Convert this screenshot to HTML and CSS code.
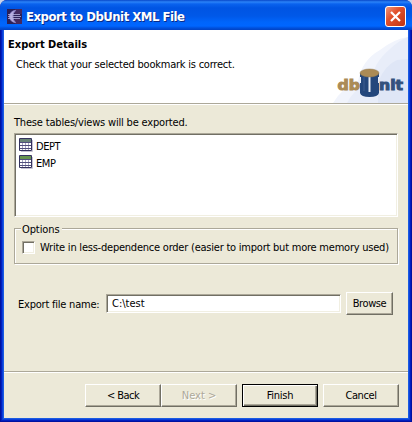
FILE: index.html
```
<!DOCTYPE html>
<html lang="en">
<head>
<meta charset="utf-8">
<title>Export to DbUnit XML File</title>
<link rel="stylesheet" href="styles.css">
</head>
<body>
<div class="window">
  <div class="titlebar">
    <svg class="app-icon" width="15" height="15" viewBox="0 0 15 15">
      <rect width="15" height="15" fill="#2a2058"/>
      <path d="M8 0H15V5H8ZM8 10H15V15H8Z" fill="#43295f"/>
      <path d="M8.500 1.500A6 6 0 0 0 8.500 13.500A8 8 0 0 1 8.500 1.500" fill="#b7aee0" stroke="#9186c8"/>
      <path d="M1 5.500H13M1 7.500H14M1 9.500H13" stroke="#b9b2de" stroke-width=".8"/>
    </svg>
    <h1 class="title"><span class="t-title">Export to DbUnit XML File</span></h1>
    <div class="close">
      <svg width="21" height="21" viewBox="0 0 21 21">
        <defs><linearGradient id="red" x2="1" y2="1"><stop stop-color="#f09a80"/><stop offset=".4" stop-color="#e2512c"/><stop offset="1" stop-color="#bd3210"/></linearGradient></defs>
        <rect x=".5" y=".5" width="20" height="20" rx="2.500" fill="url(#red)" stroke="#fff"/>
        <path d="M6 6L15 15M15 6L6 15" stroke="#fff" stroke-width="2.200"/>
      </svg>
    </div>
  </div>
  <div class="client">
    <header class="banner">
      <div class="banner-text">
        <h2><span class="t-head">Export Details</span></h2>
        <p><span class="t-check">Check that your selected bookmark is correct.</span></p>
      </div>
      <svg class="logo" width="78" height="73" viewBox="330 30 78 73">
        <path d="M333 103Q342 88 358 81Q362 60 380 50Q394 39 408 37V103Z" fill="#f1f4fc"/>
        <path d="M347 103Q352 91 371 81Q374 62 390 49Q398 41 408 37V103Z" fill="#e8edf9"/>
        <path d="M378 103V82Q385 65 397 60L408 59V103Z" fill="#dfe6f6"/>
        <text class="logo-text tan" x="337.500" y="89.500" textLength="22.500" lengthAdjust="spacingAndGlyphs">db</text>
        <text class="logo-text navy" x="379" y="89.500" textLength="24" lengthAdjust="spacingAndGlyphs">nit</text>
        <path d="M360 73V77H361V83H360V93Q361 97 369.500 97Q378 97 379 93V83H378V77H379V73Z" fill="#24477c"/>
        <path d="M369.500 77V92" stroke="#e8edf5" stroke-width="2"/>
        <path d="M364 77V91" stroke="#3c5c8e"/>
        <ellipse cx="369.500" cy="73" rx="9.500" ry="4" fill="#ab8b56" stroke="#927a50" stroke-width=".5"/>
      </svg>
    </header>
    <main class="content">
      <p class="list-label"><span class="t-these">These tables/views will be exported.</span></p>
      <ul class="list">
        <li>
          <svg width="15" height="15" viewBox="0 0 15 15"><path d="M2 13.500H13.500V2" fill="none" stroke="#c5c3d2"/><path d="M.5.5H12.500V12.500H.5Z" fill="#fff" stroke="#34325e"/><path d="M1 1H12V4H1Z" fill="#688477"/><path d="M3.500 4V12M6.500 4V12M9.500 4V12" stroke="#a5a6c0"/><path d="M1 4.500H12M1 7.500H12M1 10.500H12" stroke="#514f7d"/></svg>
          <span class="t-dept">DEPT</span>
        </li>
        <li>
          <svg width="15" height="15" viewBox="0 0 15 15"><path d="M2 13.500H13.500V2" fill="none" stroke="#c5c3d2"/><path d="M.5.5H12.500V12.500H.5Z" fill="#fff" stroke="#34325e"/><path d="M1 1H12V4H1Z" fill="#65934f"/><path d="M3.500 4V12M6.500 4V12M9.500 4V12" stroke="#a5a6c0"/><path d="M1 4.500H12M1 7.500H12M1 10.500H12" stroke="#514f7d"/></svg>
          <span class="t-emp">EMP</span>
        </li>
      </ul>
      <section class="group">
        <h3 class="legend"><span class="t-options">Options</span></h3>
        <div class="option"><span class="checkbox"></span><span class="t-write">Write in less-dependence order (easier to import but more memory used)</span></div>
      </section>
      <div class="file-row">
        <span class="file-label"><span class="t-file">Export file name:</span></span>
        <div class="input"><span class="t-path">C:\test</span></div>
        <div class="button browse"><span class="t-browse">Browse</span></div>
      </div>
    </main>
    <footer class="footer">
      <div class="button"><span class="t-back">&lt; Back</span></div>
      <div class="button disabled"><span class="t-next">Next &gt;</span></div>
      <div class="button default"><span class="t-finish">Finish</span></div>
      <div class="button last"><span class="t-cancel">Cancel</span></div>
    </footer>
  </div>
</div>
</body>
</html>
```
FILE: styles.css
```
* { box-sizing: border-box; margin: 0; padding: 0; }
body {
  width: 412px; height: 422px; overflow: hidden; background: #c9d3ea;
  font: 11px/14px "DejaVu Sans Condensed", "DejaVu Sans", sans-serif;
  font-stretch: condensed; color: #000; white-space: nowrap;
}
.window {
  width: 412px; height: 422px; border-radius: 7px 7px 0 0; overflow: hidden;
  display: flex; flex-direction: column; background: #00129c;
}
.titlebar {
  position: relative; z-index: 1;
  height: 30px; flex: none; display: flex; align-items: center; padding: 2px 6px 0 7px;
  background: linear-gradient(#0847c9 0, #2b83f8 2px, #0a62ee 4px, #0054e3 8px, #0058e8 16px, #0065fb 22px, #0066ff 26px, #0050dc 28px, #0142c4 30px);
}
.title { flex: 1; margin-left: 4px; padding-top: 1px; font: bold 13px/18px "DejaVu Sans Condensed", sans-serif; font-stretch: condensed; color: #fff; text-shadow: 1px 1px #0a2b87; }
.close { width: 21px; height: 21px; }
.close svg { display: block; }
.client {
  height: 388px; margin: 0 4px 4px; display: flex; flex-direction: column; background: #ece9d8;
  box-shadow: 0 0 0 1px #1a5be2, 0 0 0 2px #0b3fd8, 0 0 0 3px #001fc0, 0 0 0 4px #0012a0;
}
.banner { height: 75px; flex: none; display: flex; justify-content: space-between; background: linear-gradient(#fff 73px, #aca899 73px, #aca899 74px, #fff 74px); }
.banner-text { padding: 8px 0 0 4px; }
.banner h2 { font-size: 11px; line-height: 14px; }
.banner p { margin: 6px 0 0 8px; }
.logo { display: block; }
.logo-text { font: bold 14px "DejaVu Sans", sans-serif; stroke-width: 1; }
.tan { fill: #ab8b56; stroke: #ab8b56; }
.navy { fill: #34517d; stroke: #34517d; }
.content { height: 266px; flex: none; padding: 11px 10px 0; }
.list-label { height: 17px; }
.list {
  height: 84px; list-style: none; padding: 3px 3px; background: #fff;
  border: 1px solid; border-color: #aca899 #fff #fff #aca899;
  box-shadow: inset 1px 1px #716f64, inset -1px -1px #f1efe2;
}
.list li { height: 17px; display: flex; align-items: center; gap: 2px; padding-left: 1px; }
.list span { padding-top: 2px; }
.group { height: 36px; margin-top: 11px; border: 1px solid #aca899; box-shadow: 1px 1px #fff, inset 1px 1px #fff; }
.legend { width: 41px; height: 14px; margin: -7px 0 0 6px; padding: 1px 0 0 1px; background: #ece9d8; font-size: 11px; line-height: 13px; font-weight: normal; }
.option { height: 13px; display: flex; align-items: center; margin: 5px 0 0 7px; gap: 5px; }
.option .t-write { padding-top: 1px; }
.checkbox { width: 13px; height: 13px; flex: none; background: #fff; border: 1px solid; border-color: #aca899 #fff #fff #aca899; box-shadow: inset 1px 1px #716f64, inset -1px -1px #f1efe2; }
.file-row { display: flex; align-items: center; height: 23px; margin-top: 28px; }
.file-label { width: 92px; padding: 2px 0 0 4px; }
.input { width: 235px; height: 19px; padding: 2px 0 0 5px; background: #fff; border: 1px solid; border-color: #aca899 #fff #fff #aca899; box-shadow: inset 1px 1px #716f64, inset -1px -1px #f1efe2; }
.button {
  width: 76px; height: 23px; display: flex; align-items: center; justify-content: center;
  border: 1px solid; border-color: #fff #716f64 #716f64 #fff; box-shadow: inset -1px -1px #aca899;
}
.browse { width: 47px; margin-left: 5px; }
.footer { flex: 1; display: flex; align-items: flex-start; padding: 12px 9px 0 81px; border-top: 1px solid #aca899; box-shadow: inset 0 1px #fff; }
.disabled { color: #aca899; text-shadow: 1px 1px #fff; }
.default { margin-left: 5px; border-color: #000; box-shadow: inset 1px 1px #fff, inset -1px -1px #716f64, inset -2px -2px #aca899; }
.last { margin-left: 5px; }

/* Tracking that keeps each label to the dialog font's width */
.t-title { letter-spacing: -.49px; }
.t-check, .t-write { letter-spacing: -.225px; }
.t-these { letter-spacing: -.18px; }
.t-dept, .t-emp { letter-spacing: -.45px; }
.t-options { letter-spacing: -.1px; }
.t-file { letter-spacing: -.22px; }
.t-browse, .t-cancel { letter-spacing: -.4px; }
.t-back { letter-spacing: -.55px; }
.t-finish { letter-spacing: -.25px; }
```
